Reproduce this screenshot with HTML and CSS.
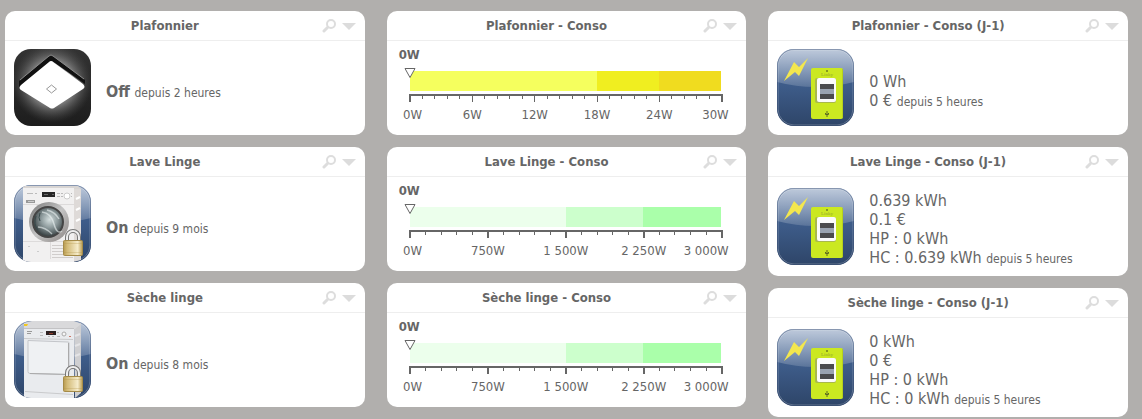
FILE: index.html
```html
<!DOCTYPE html>
<html lang="fr">
<head>
<meta charset="UTF-8">
<meta name="viewport" content="width=device-width, initial-scale=1.0">
<title>Consommation</title>
<link rel="stylesheet" href="styles.css">
</head>
<body>
  <svg class="defs" aria-hidden="true">
    <defs>
      <linearGradient id="blue" x1="0" y1="0" x2="0" y2="1">
        <stop offset="0" stop-color="#48699a"/>
        <stop offset="0.5" stop-color="#3d5b88"/>
        <stop offset="1" stop-color="#2e4568"/>
      </linearGradient>
      <linearGradient id="shine" x1="0" y1="0" x2="0" y2="1">
        <stop offset="0" stop-color="#fff" stop-opacity="0.65"/>
        <stop offset="1" stop-color="#fff" stop-opacity="0.15"/>
      </linearGradient>
      <linearGradient id="dark" x1="0" y1="0" x2="0" y2="1">
        <stop offset="0" stop-color="#333"/>
        <stop offset="1" stop-color="#1d1d1d"/>
      </linearGradient>
      <radialGradient id="glow" gradientUnits="userSpaceOnUse" cx="38" cy="34" r="40">
        <stop offset="0.5" stop-color="#b5b5b5"/>
        <stop offset="1" stop-color="#555" stop-opacity="0"/>
      </radialGradient>
      <linearGradient id="brass" x1="0" y1="0" x2="1" y2="0">
        <stop offset="0" stop-color="#b79a50"/>
        <stop offset="0.2" stop-color="#d3bb78"/>
        <stop offset="0.75" stop-color="#f6eccb"/>
        <stop offset="1" stop-color="#b99b4f"/>
      </linearGradient>
      <linearGradient id="chrome" x1="0" y1="0" x2="1" y2="1">
        <stop offset="0" stop-color="#777"/>
        <stop offset="0.5" stop-color="#c4c4c4"/>
        <stop offset="1" stop-color="#8b8583"/>
      </linearGradient>
      <radialGradient id="drum" cx="0.55" cy="0.42" r="0.55">
        <stop offset="0" stop-color="#d5dfdf"/>
        <stop offset="0.5" stop-color="#8d9a9c"/>
        <stop offset="1" stop-color="#3c4547"/>
      </radialGradient>
      <clipPath id="round"><rect width="77" height="77" rx="17"/></clipPath>
    </defs>

    <symbol id="search" viewBox="0 0 14 14">
      <circle cx="9" cy="5" r="4" fill="none" stroke="#ddd" stroke-width="2"/>
      <path d="M5.5 8.5L2 12" stroke="#ddd" stroke-width="3" stroke-linecap="round"/>
    </symbol>
    <symbol id="arrow" viewBox="0 0 14 14">
      <path d="M0 4h14l-7 7z" fill="#dcdcdc"/>
    </symbol>

    <symbol id="tile" viewBox="0 0 77 77">
      <rect width="77" height="77" rx="17" fill="url(#blue)"/>
      <path d="M0 17A17 17 0 0 1 17 0h43a17 17 0 0 1 17 17v16Q38 43 0 33z" fill="url(#shine)"/>
      <rect x="1" y="1" width="75" height="75" rx="16" fill="none" stroke="#fff" stroke-opacity="0.25"/>
      <rect x="0.5" y="0.5" width="76" height="76" rx="16.5" fill="none" stroke="#2b4268" stroke-opacity="0.4"/>
    </symbol>

    <symbol id="lock" viewBox="0 0 20 27">
      <path d="M4 12V8a6 6 0 0 1 12 0v4" fill="none" stroke="#777" stroke-width="4"/>
      <path d="M4 12V8a6 6 0 0 1 12 0v4" fill="none" stroke="#eee" stroke-width="2"/>
      <rect x="0.5" y="11.5" width="19" height="15" rx="1" fill="url(#brass)" stroke="#a58b48"/>
      <path d="M1 14.5h18M1 23.5h18" stroke="#b3964c" stroke-opacity="0.3"/>
    </symbol>

    <symbol id="lamp" viewBox="0 0 77 77">
      <g clip-path="url(#round)">
        <rect width="77" height="77" fill="url(#dark)"/>
        <rect width="77" height="77" fill="url(#glow)" opacity="0.75"/>
        <path d="M5 32L35 7q2-2 4 0l32 24v4L38 12 5 38z" fill="#111"/>
        <path d="M6 31L35 7q2-2 4 0l31 23" fill="none" stroke="#888" stroke-width="1"/>
        <path d="M35 13q2-2 4 0l30 22q3 3 0 5L40 59q-2 1-4 0L7 41q-3-2 0-5z" fill="#fff"/>
        <path d="M32.5 40l5-4 5 4-5 4z" fill="none" stroke="#999"/>
      </g>
    </symbol>

    <symbol id="washer" viewBox="0 0 77 77">
      <use href="#tile" width="77" height="77"/>
      <g clip-path="url(#round)">
        <path d="M59 2l8 2v71l-8 2z" fill="#dedad8"/>
        <path d="M9 1h55l3 3H9z" fill="#d8d5d3"/>
        <rect x="9" y="3" width="51" height="74" fill="#f1f0f0"/>
        <path d="M9 19.5h51M9 56.5h51M36.5 57v17" stroke="#dddbdb"/>
        <path d="M62 14l4-2M62 25l4-2M62 36l4-2" stroke="#fff" stroke-width="2"/>
        <rect x="28" y="7" width="13" height="5" fill="#252525"/>
        <path d="M30 9.5h4M38 9.5h2" stroke="#666"/>
        <path d="M13 8.5h6M21 8.5h2" stroke="#bbb"/>
        <rect x="12" y="15" width="9" height="3" fill="#999"/>
        <path d="M14 16.5h6" stroke="#ccc"/>
        <path d="M43 8.5h3M43 11.5h3M47 8.5h2M47 11.5h2M57 8.5h1M57 11.5h1" stroke="#bbb"/>
        <circle cx="53" cy="11" r="3" fill="#fff" stroke="#ccc"/>
        <circle cx="35" cy="37" r="20" fill="url(#chrome)"/>
        <circle cx="34" cy="37" r="15" fill="url(#drum)" stroke="#444" stroke-width="2"/>
        <path d="M28 27q9 1 12 12t8 7M24 42q7 0 14 7M33 25q8 2 12 9" fill="none" stroke="#edf3f3" stroke-width="1.5" stroke-opacity="0.6"/>
        <path d="M22 31q-3 8 2 14M26 28q-2 5 0 8" fill="none" stroke="#38494b"/>
        <path d="M38 60.5h21M38 63.5h21M38 66.5h21M38 69.5h21M38 72.5h21" stroke="#d0cdcc"/>
        <path d="M23 66.5h2M14 61.5h2" stroke="#ccc"/>
      </g>
      <use href="#lock" x="49" y="44" width="20" height="27"/>
    </symbol>

    <symbol id="dryer" viewBox="0 0 77 77">
      <use href="#tile" width="77" height="77"/>
      <g clip-path="url(#round)">
        <path d="M60 4l7-2v70l-6 5z" fill="#cfcfd1"/>
        <path d="M10 2l8-2h42l7 3-6 5H10z" fill="#d9d9db"/>
        <rect x="10" y="8" width="50" height="69" fill="#e9ebee"/>
        <path d="M10 7.5h50" stroke="#c2c2c4"/>
        <path d="M10 17.5l49 1M11 70.5l48 3" stroke="#c9cacc"/>
        <path d="M10 3h4l-1 2h-3z" fill="#f2c81e"/>
        <rect x="32" y="10" width="10" height="4" fill="#2c2020"/>
        <path d="M35 12.5h4" stroke="#8c3a2c"/>
        <path d="M13 10.5h5M13 12.5h4" stroke="#999"/>
        <path d="M26 11.5h3M26 14.5h3M34 15.5h2M38 15.5h2M43 11.5h2M43 15.5h3" stroke="#bbb"/>
        <circle cx="50" cy="13" r="2" fill="#f6f6f6" stroke="#aaa"/>
        <path d="M55 15.5h2" stroke="#c76"/>
        <path d="M14 19.5l40 1.5q1 0 1 1v31.500l-39-1q-2 0-2-2z" fill="#eff1f3" stroke="#c3c5c9"/>
        <path d="M16 52.5l39 1M54.5 22v31" fill="none" stroke="#aaa"/>
        <path d="M61 15l5-2M61 25l5-2M61 35l5-2" stroke="#e4e4e6" stroke-width="2"/>
      </g>
      <use href="#lock" x="49" y="44" width="20" height="27"/>
    </symbol>

    <symbol id="meter" viewBox="0 0 77 77">
      <use href="#tile" width="77" height="77"/>
      <path d="M31 9L22 27l-4-4L7 32l10-19 5 5z" fill="#f3e74e"/>
      <rect x="34" y="19" width="32" height="51" rx="2" fill="#cbe821"/>
      <path d="M65.5 20v49" stroke="#b5d01c"/>
      <circle cx="50" cy="22" r="1" fill="#6d7d22"/>
      <rect x="38" y="29" width="21" height="25" rx="2" fill="#a9b84c"/>
      <rect x="40" y="29" width="19" height="24" rx="2" fill="#fbfbfb"/>
      <rect x="43" y="35" width="14" height="15" fill="#4b4b4d"/>
      <rect x="43" y="40" width="14" height="5" fill="#9aa3b0"/>
      <path d="M50 62v6M48.5 64v1.500h3V64" fill="none" stroke="#5c6a20"/>
    </symbol>
  </svg>

  <main class="dashboard">
    <div class="column">
      <section class="card">
        <header class="card-header">
          <h2>Plafonnier</h2>
          <div class="tools">
            <button type="button" aria-label="Historique"><svg><use href="#search"/></svg></button>
            <button type="button" aria-label="Menu"><svg><use href="#arrow"/></svg></button>
          </div>
        </header>
        <div class="device">
          <svg class="icon"><use href="#lamp"/></svg>
          <p class="state"><strong>Off</strong> <small>depuis 2 heures</small></p>
        </div>
      </section>
      <section class="card">
        <header class="card-header">
          <h2>Lave Linge</h2>
          <div class="tools">
            <button type="button" aria-label="Historique"><svg><use href="#search"/></svg></button>
            <button type="button" aria-label="Menu"><svg><use href="#arrow"/></svg></button>
          </div>
        </header>
        <div class="device">
          <svg class="icon"><use href="#washer"/></svg>
          <p class="state"><strong>On</strong> <small>depuis 9 mois</small></p>
        </div>
      </section>
      <section class="card">
        <header class="card-header">
          <h2>Sèche linge</h2>
          <div class="tools">
            <button type="button" aria-label="Historique"><svg><use href="#search"/></svg></button>
            <button type="button" aria-label="Menu"><svg><use href="#arrow"/></svg></button>
          </div>
        </header>
        <div class="device">
          <svg class="icon"><use href="#dryer"/></svg>
          <p class="state"><strong>On</strong> <small>depuis 8 mois</small></p>
        </div>
      </section>
    </div>

    <div class="column">
      <section class="card">
        <header class="card-header">
          <h2>Plafonnier - Conso</h2>
          <div class="tools">
            <button type="button" aria-label="Historique"><svg><use href="#search"/></svg></button>
            <button type="button" aria-label="Menu"><svg><use href="#arrow"/></svg></button>
          </div>
        </header>
        <div class="gauge">
          <p class="gauge-value">0W</p>
          <div class="gauge-bar yellow">
            <span class="low"></span><span class="mid"></span><span class="high"></span>
            <svg class="marker" viewBox="0 0 12 12"><path d="M1 1.5h10L6 10.5z"/></svg>
          </div>
          <svg class="axis" data-ticks="25" data-labels="0W,6W,12W,18W,24W,30W"></svg>
        </div>
      </section>
      <section class="card">
        <header class="card-header">
          <h2>Lave Linge - Conso</h2>
          <div class="tools">
            <button type="button" aria-label="Historique"><svg><use href="#search"/></svg></button>
            <button type="button" aria-label="Menu"><svg><use href="#arrow"/></svg></button>
          </div>
        </header>
        <div class="gauge">
          <p class="gauge-value">0W</p>
          <div class="gauge-bar green">
            <span class="low"></span><span class="mid"></span><span class="high"></span>
            <svg class="marker" viewBox="0 0 12 12"><path d="M1 1.5h10L6 10.5z"/></svg>
          </div>
          <svg class="axis" data-ticks="20" data-labels="0W,750W,1 500W,2 250W,3 000W"></svg>
        </div>
      </section>
      <section class="card">
        <header class="card-header">
          <h2>Sèche linge - Conso</h2>
          <div class="tools">
            <button type="button" aria-label="Historique"><svg><use href="#search"/></svg></button>
            <button type="button" aria-label="Menu"><svg><use href="#arrow"/></svg></button>
          </div>
        </header>
        <div class="gauge">
          <p class="gauge-value">0W</p>
          <div class="gauge-bar green">
            <span class="low"></span><span class="mid"></span><span class="high"></span>
            <svg class="marker" viewBox="0 0 12 12"><path d="M1 1.5h10L6 10.5z"/></svg>
          </div>
          <svg class="axis" data-ticks="20" data-labels="0W,750W,1 500W,2 250W,3 000W"></svg>
        </div>
      </section>
    </div>

    <div class="column">
      <section class="card">
        <header class="card-header">
          <h2>Plafonnier - Conso (J-1)</h2>
          <div class="tools">
            <button type="button" aria-label="Historique"><svg><use href="#search"/></svg></button>
            <button type="button" aria-label="Menu"><svg><use href="#arrow"/></svg></button>
          </div>
        </header>
        <div class="device">
          <svg class="icon"><use href="#meter"/><text x="50" y="27">Linky</text></svg>
          <p>0 Wh<br>0 € <small>depuis 5 heures</small></p>
        </div>
      </section>
      <section class="card">
        <header class="card-header">
          <h2>Lave Linge - Conso (J-1)</h2>
          <div class="tools">
            <button type="button" aria-label="Historique"><svg><use href="#search"/></svg></button>
            <button type="button" aria-label="Menu"><svg><use href="#arrow"/></svg></button>
          </div>
        </header>
        <div class="device">
          <svg class="icon"><use href="#meter"/><text x="50" y="27">Linky</text></svg>
          <p>0.639 kWh<br>0.1 €<br>HP : 0 kWh<br>HC : 0.639 kWh <small>depuis 5 heures</small></p>
        </div>
      </section>
      <section class="card">
        <header class="card-header">
          <h2>Sèche linge - Conso (J-1)</h2>
          <div class="tools">
            <button type="button" aria-label="Historique"><svg><use href="#search"/></svg></button>
            <button type="button" aria-label="Menu"><svg><use href="#arrow"/></svg></button>
          </div>
        </header>
        <div class="device">
          <svg class="icon"><use href="#meter"/><text x="50" y="27">Linky</text></svg>
          <p>0 kWh<br>0 €<br>HP : 0 kWh<br>HC : 0 kWh <small>depuis 5 heures</small></p>
        </div>
      </section>
    </div>
  </main>

  <script>
    const SVG_NS = 'http://www.w3.org/2000/svg';

    function addNode(parent, name, attributes) {
      const node = document.createElementNS(SVG_NS, name);
      for (const key in attributes) {
        node.setAttribute(key, attributes[key]);
      }
      parent.appendChild(node);
      return node;
    }

    function drawAxis(axis) {
      const ticks = Number(axis.dataset.ticks);
      const labels = axis.dataset.labels.split(',');
      const last = labels.length - 1;

      addNode(axis, 'rect', { x: 0, y: 0, width: '100%', height: 2 });
      for (let i = 0; i <= ticks; i++) {
        const major = i % 5 === 0;
        const end = i === 0 || i === ticks;
        const x = `${i / ticks * 100}%`;
        addNode(axis, 'line', {
          x1: x, x2: x, y1: 0, y2: major ? 8 : 5,
          class: end || (major && ticks === 20) ? 'thick' : 'thin'
        });
      }

      // the outer labels overhang the scale by a few pixels
      labels.forEach((label, i) => {
        const text = addNode(axis, 'text', {
          x: `${i / last * 100}%`,
          y: 25,
          dx: i === 0 ? -7 : i === last ? 7 : 0,
          'text-anchor': i === 0 ? 'start' : i === last ? 'end' : 'middle'
        });
        text.textContent = label;
      });
    }

    document.querySelectorAll('.axis').forEach(drawAxis);
  </script>
</body>
</html>
```
FILE: styles.css
```css
body {
  font-family: "DejaVu Sans Condensed", Tahoma, "DejaVu Sans", sans-serif;
  margin: 0;
  padding: 0;
  background-color: #b1afad;
  color: #666;
}
h2, p {
  margin: 0;
}
.defs {
  position: absolute;
  width: 0;
  height: 0;
}
.dashboard {
  display: grid;
  grid-template-columns: repeat(3, minmax(0, 1fr));
  column-gap: 22px;
  padding: 11px 14px 0 5px;
}
.column {
  display: flex;
  flex-direction: column;
  gap: 12px;
}
.card {
  background-color: #fff;
  border-radius: 10px;
}
.card-header {
  display: flex;
  align-items: center;
  height: 29px;
  border-bottom: 1px solid #eee;
}
.card-header h2 {
  flex: 1;
  padding-left: 3px;
  font-size: 13px;
  line-height: 18px;
  text-align: center;
}
.tools {
  display: flex;
  gap: 6px;
  padding-right: 9px;
}
.tools button {
  display: block;
  padding: 0;
  border: none;
  background: none;
  cursor: pointer;
}
.tools svg {
  display: block;
  width: 14px;
  height: 14px;
}
.device {
  display: flex;
  align-items: center;
  gap: 15px;
  padding: 8px 9px 9px;
}
.icon {
  flex: none;
  width: 77px;
  height: 77px;
}
.icon text {
  font-family: "Liberation Serif", serif;
  font-size: 5px;
  text-anchor: middle;
  fill: #94a62a;
}
.device p {
  padding-top: 6px;
  font-size: 16px;
  line-height: 19px;
}
.device .state {
  padding-top: 8px;
}
.device small {
  font-size: 12px;
  line-height: 12px;
}
.gauge {
  padding: 5px 25px 11px 23px;
}
.gauge-value {
  margin-left: -11px;
  font-size: 13px;
  font-weight: bold;
  line-height: 18px;
}
.gauge-bar {
  position: relative;
  display: flex;
  height: 20px;
  margin: 7px 0 3px;
}
.yellow .low {
  flex: 3;
  background-color: #f5ff5e;
}
.yellow .mid {
  flex: 1;
  background-color: #f0ee20;
}
.yellow .high {
  flex: 1;
  background-color: #f0dc1f;
}
.green .low {
  flex: 2;
  background-color: #ecffec;
}
.green .mid {
  flex: 1;
  background-color: #ccffcc;
}
.green .high {
  flex: 1;
  background-color: #aaffaa;
}
.marker {
  position: absolute;
  top: -4px;
  left: -6px;
  width: 12px;
  height: 12px;
  fill: #fff;
  stroke: #666;
}
.axis {
  display: block;
  width: 100%;
  height: 30px;
  overflow: visible;
  fill: #666;
  font-size: 13px;
}
.axis line {
  stroke: #666;
  shape-rendering: crispEdges;
}
.axis .thin {
  stroke-width: 1px;
}
.axis .thick {
  stroke-width: 2px;
}
```
